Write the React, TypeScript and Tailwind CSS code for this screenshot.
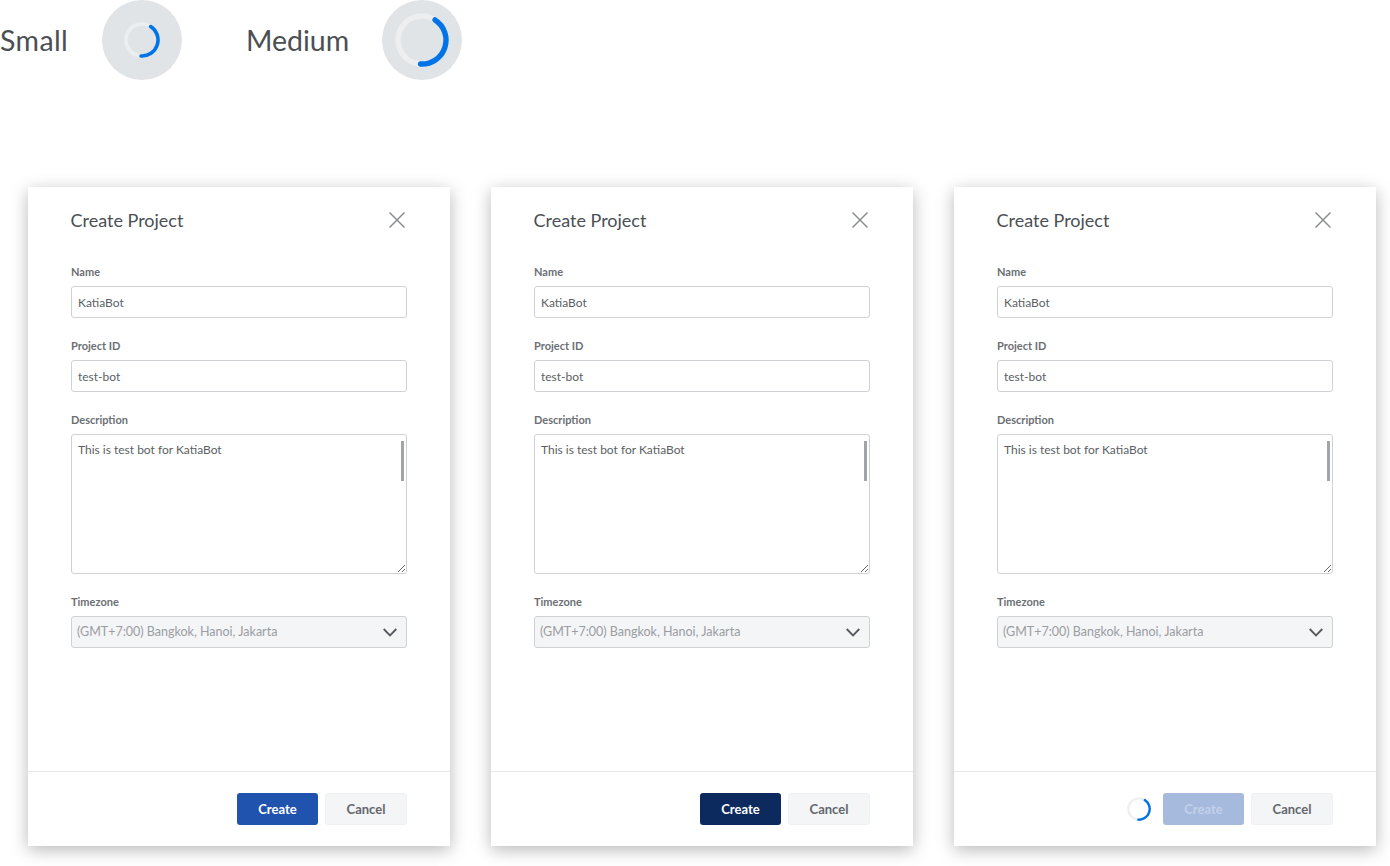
const font = "font-['Lato','Noto_Sans',sans-serif]";

function Spinner({ size, track }: { size: number; track: string }) {
  return (
    <svg width={size} height={size} viewBox="0 0 36 36" fill="none">
      <circle cx="18" cy="18" r="16" stroke={track} strokeWidth="3.6" />
      <path d="M26.7 4.6 A16 16 0 0 1 17 34" stroke="#0073e6" strokeWidth="3.6" strokeLinecap="round" />
    </svg>
  );
}

function Field({ label, children }: { label: string; children: React.ReactNode }) {
  return (
    <div>
      <div className="h-[15px] text-[11px] leading-[15px] font-bold text-[#6b6f74]">{label}</div>
      <div className="mt-[7px]">{children}</div>
    </div>
  );
}

function TextInput({ value }: { value: string }) {
  return (
    <input
      readOnly
      value={value}
      className="block h-[32px] w-full rounded-[3px] border border-[#cfd2d5] bg-white px-[6px] text-[12px] text-[#5b5f64] outline-none"
    />
  );
}

function ProjectCard({ createClass, loading }: { createClass: string; loading?: boolean }) {
  return (
    <div className="flex h-[659px] w-[422px] flex-col bg-white shadow-[0_4px_16px_rgba(0,0,0,0.28)]">
      <div className="flex-1 px-[43px]">
        <div className="flex h-[66px] items-center justify-between">
          <h2 className="-mt-[1px] -ml-[0.5px] text-[18px] leading-none font-normal text-[#4b4f54]">Create Project</h2>
          <svg className="mr-[2px]" width="16" height="16" viewBox="0 0 16 16" fill="none" stroke="#8a8e92" strokeWidth="1.5">
            <path d="M0.5 0.5 15.5 15.5 M15.5 0.5 0.5 15.5" />
          </svg>
        </div>
        <div className="mt-[11px] flex flex-col gap-[20px]">
          <Field label="Name">
            <TextInput value="KatiaBot" />
          </Field>
          <Field label="Project ID">
            <TextInput value="test-bot" />
          </Field>
          <Field label="Description">
            <div className="relative">
              <textarea
                readOnly
                value="This is test bot for KatiaBot"
                className="block h-[140px] w-full resize-y rounded-[3px] border border-[#cfd2d5] bg-white px-[6px] py-[7px] text-[12px] leading-[15px] text-[#5b5f64] outline-none"
              />
              <div className="absolute top-[7px] right-[3px] h-[40px] w-[3px] bg-[#a0a5a9]" />
            </div>
          </Field>
          <Field label="Timezone">
            <div className="flex h-[32px] items-center justify-between rounded-[3px] border border-[#cfd2d5] bg-[#f4f5f7] pr-[9px] pl-[5px] text-[12.5px] text-[#9a9da1]">
              <span>(GMT+7:00) Bangkok, Hanoi, Jakarta</span>
              <svg width="14" height="9" viewBox="0 0 14 9" fill="none" stroke="#55595e" strokeWidth="1.8">
                <path d="M0.7 1 7 7.5 13.3 1" />
              </svg>
            </div>
          </Field>
        </div>
      </div>
      <div className="flex h-[75px] items-start justify-end gap-[7px] border-t border-[#e6e8ea] pt-[21px] pr-[43px]">
        {loading && (
          <div className="mt-[4px] mr-[5px]">
            <Spinner size={24} track="#eef0f2" />
          </div>
        )}
        <button className={`h-[32px] w-[81px] rounded-[3px] pt-[2px] text-[13px] font-bold ${createClass}`}>Create</button>
        <button className="h-[32px] w-[82px] rounded-[3px] border border-[#f0f1f3] bg-[#f4f5f7] pt-[2px] text-[13px] font-bold text-[#63676c]">
          Cancel
        </button>
      </div>
    </div>
  );
}

export default function App() {
  return (
    <div className={`h-[866px] w-[1390px] overflow-hidden bg-white ${font}`}>
      <div className="flex items-center text-[28.5px] leading-none text-[#4b4f54]">
        <span className="w-[102px] tracking-[0.4px]">Small</span>
        <div className="flex h-[80px] w-[80px] items-center justify-center rounded-full bg-[#e1e4e7]">
          <Spinner size={36} track="#eceef0" />
        </div>
        <span className="ml-[64px] w-[136px]">Medium</span>
        <div className="flex h-[80px] w-[80px] items-center justify-center rounded-full bg-[#e1e4e7]">
          <Spinner size={54} track="#eceef0" />
        </div>
      </div>
      <div className="mt-[107px] flex gap-[41px] pl-[28px]">
        <ProjectCard createClass="bg-[#1f53ae] text-white" />
        <ProjectCard createClass="bg-[#0c2a5e] text-white" />
        <ProjectCard createClass="bg-[#a6bade] text-[#c3d0e8]" loading />
      </div>
    </div>
  );
}
